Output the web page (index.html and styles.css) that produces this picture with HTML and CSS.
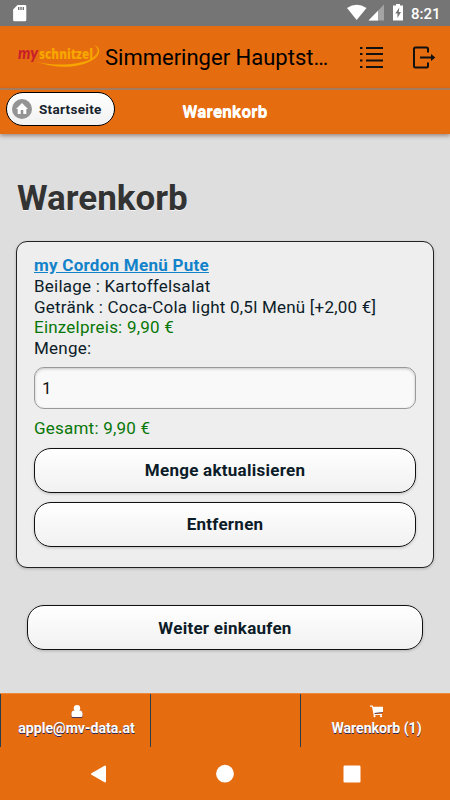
FILE: index.html
```html
<!DOCTYPE html>
<html lang="de">
<head>
    <meta charset="UTF-8">
    <meta name="viewport" content="width=device-width, initial-scale=1.0">
    <title>Warenkorb</title>
    <link rel="stylesheet" href="styles.css">
</head>
<body>
    <!-- Statusleiste -->
    <div class="status-bar">
        <svg class="sd-icon" width="14" height="17" viewBox="0 0 14 17"><path fill="#fff" fill-rule="evenodd" d="M4.500 0H12a1.300 1.300 0 0 1 1.300 1.300V15a1.300 1.300 0 0 1-1.300 1.300H1.400A1.300 1.300 0 0 1 .1 15V4.500zM5 2v3h1.400V2zm2.300 0v3h1.400V2zm2.300 0v3H11V2z"/></svg>
        <svg width="76" height="18" viewBox="0 0 76 18">
            <path fill="#fff" d="M0 4Q9.700-2.500 19.500 4L9.700 16z"/>
            <path fill="#a4a4a4" d="M37 .5v16H21.500z"/>
            <path fill="#fff" d="M31 6.800v9.700h-9.500z"/>
            <path fill="#fff" d="M49 0h4v1.500h3V16.500H46V1.500h3z"/>
            <path fill="#757575" d="M52.300 3.500 48.300 9.500h2.200V14l3.500-6h-2.200z"/>
        </svg>
        <span class="time">8:21</span>
    </div>

    <!-- App-Leiste -->
    <div class="app-bar">
        <svg class="logo" width="84" height="36" viewBox="0 -5 84 36">
            <path d="M77 1C84 3 85 11 74 17C61 24 39 25 20 18C42 23 62 20 72 16C82 11 83 5 77 1z" fill="#f7a600"/>
            <text class="logo-my" x="1" y="15" textLength="20" lengthAdjust="spacingAndGlyphs">my</text>
            <text class="logo-name" x="22" y="14.500" textLength="54" lengthAdjust="spacingAndGlyphs">schnitzel</text>
        </svg>
        <span class="app-title">Simmeringer Hauptst…</span>
        <svg class="list-icon" width="23" height="23" viewBox="0 0 23 23"><path stroke="#111" stroke-width="2" d="M0 2h2.500M6 2h17M0 8h2.500M6 8h17M0 14.500h2.500M6 14.500h17M0 21h2.500M6 21h17"/></svg>
        <svg class="exit-icon" width="23" height="23" viewBox="0 0 23 23"><path fill="none" stroke="#111" stroke-width="2" d="M15 6.500V3q0-1.500-1.500-1.500h-11Q1 1.500 1 3v17q0 1.500 1.500 1.500h11Q15 21.500 15 20v-3.500M7 11.500h12"/><path fill="#111" d="M18 8 22.300 11.500 18 15z"/></svg>
    </div>

    <!-- Kopfzeile -->
    <div class="header">
        <button class="home-btn">
            <svg width="20" height="20" viewBox="0 0 20 20"><circle cx="10" cy="10" r="10" fill="#949494"/><path fill="#fff" d="M10 4 4 10h1.700v5H8.700v-4h2.600v4h3v-5H16z"/></svg>
            Startseite
        </button>
        <h2>Warenkorb</h2>
    </div>

    <!-- Inhalt -->
    <div class="content">
        <h1>Warenkorb</h1>
        <div class="cart-item">
            <a class="item-name" href="#">my Cordon Menü Pute</a>
            <p>Beilage : Kartoffelsalat</p>
            <p>Getränk : Coca-Cola light 0,5l Menü [+2,00 €]</p>
            <p class="price">Einzelpreis: 9,90 €</p>
            <p>Menge:</p>
            <input class="amount" type="text" value="1">
            <p class="price">Gesamt: 9,90 €</p>
            <button class="btn">Menge aktualisieren</button>
            <button class="btn">Entfernen</button>
        </div>
        <button class="btn btn-shop">Weiter einkaufen</button>
    </div>

    <!-- Fußzeile -->
    <div class="footer">
        <a class="tab">
            <svg width="12" height="13" viewBox="0 0 12 13"><path class="icon-shadow" d="M3 5.500Q0 6 0.500 11.500Q.6 13 2 13h8q1.400 0 1.500-1.500Q12 6 9 5.500z"/><path fill="#fff" d="M2.700 5.500Q0 6 .5 10.500.6 12 2 12h8q1.400 0 1.500-1.500Q12 6 9.300 5.500z"/><circle cx="6" cy="3.200" r="3.200" fill="#fff"/></svg>
            <span>apple@mv-data.at</span>
        </a>
        <a class="tab"></a>
        <a class="tab">
            <svg width="13" height="13" viewBox="0 0 13 13"><path class="icon-shadow" d="M3 2.500h10v5L4.500 9z"/><path fill="#fff" d="M0 .5h2.700l.4 1.200H13V7L4.400 8l.2 1H12v1H3.600L2 1.700H0z"/><circle cx="4.500" cy="11.200" r="1.100" fill="#fff"/><circle cx="11" cy="11.200" r="1.100" fill="#fff"/></svg>
            <span>Warenkorb (1)</span>
        </a>
    </div>

    <!-- Navigationsleiste -->
    <div class="nav-bar">
        <svg width="18" height="20" viewBox="0 0 18 20"><path fill="#fff" stroke="#fff" stroke-width="2" stroke-linejoin="round" d="M16 2.500v15L3 10z"/></svg>
        <svg width="18" height="20" viewBox="0 0 18 20"><circle cx="9" cy="9.700" r="8.900" fill="#fff"/></svg>
        <svg width="18" height="20" viewBox="0 0 18 20"><rect x=".5" y="1.500" width="17" height="17" rx="1.300" fill="#fff"/></svg>
    </div>
</body>
</html>
```
FILE: styles.css
```css
* {
    margin: 0;
    padding: 0;
    box-sizing: border-box;
    font-family: Roboto, sans-serif;
}

body {
    width: 450px;
    height: 800px;
    display: flex;
    flex-direction: column;
    background: #dedede;
    color: #0c1c28;
    overflow: hidden;
}

svg {
    flex-shrink: 0;
}

/* Statusleiste */
.status-bar {
    display: flex;
    align-items: center;
    height: 26px;
    padding: 0 10px 0 13px;
    background: #757575;
}

.sd-icon {
    margin-right: auto;
}

.time {
    width: 29px;
    margin-left: -12px;
    padding-top: 1px;
    font-size: 15px;
    font-weight: 500;
    color: #fff;
    white-space: nowrap;
}

/* App-Leiste */
.app-bar {
    display: flex;
    align-items: center;
    height: 62px;
    padding: 0 14px 0 17px;
    background: #e66c10;
}

.logo {
    overflow: visible;
}

.logo-my {
    font: italic 900 17px Lato, sans-serif;
    fill: #c8202a;
}

.logo-name {
    font: 800 14.5px "Open Sans", sans-serif;
    fill: #f7a600;
}

.app-title {
    width: 259px;
    padding-left: 4px;
    font-size: 22px;
    color: #000;
    white-space: nowrap;
}

.exit-icon {
    margin-left: 30px;
}

/* Kopfzeile */
.header {
    position: relative;
    display: flex;
    align-items: center;
    justify-content: center;
    height: 46px;
    border-top: 2px solid #a67a5d;
    background: #e66c10;
    box-shadow: 0 2px 4px rgba(80,40,20,0.45);
}

.header h2 {
    padding-bottom: 2px;
    font-size: 17px;
    line-height: 20px;
    letter-spacing: 0.25px;
    color: #fff;
    text-shadow: 0 1px 0 #fff;
}

.home-btn {
    position: absolute;
    left: 6px;
    top: 2px;
    display: flex;
    align-items: center;
    gap: 7px;
    width: 109px;
    height: 34px;
    padding-left: 5px;
    border: 1px solid #000;
    border-radius: 17px;
    background: linear-gradient(#fff, #f1f1f1);
    font-size: 13.5px;
    font-weight: 700;
    letter-spacing: 0.3px;
    color: #17232d;
}

/* Inhalt */
.content {
    flex: 1;
    padding: 44px 16px 0;
}

h1 {
    margin-bottom: 21px;
    padding-left: 1px;
    font-size: 35px;
    line-height: 42px;
    color: #333;
    text-shadow: 0 1px 0 #f3f3f3;
}

.cart-item {
    height: 327px;
    padding: 13px 17px;
    border: 1px solid #222;
    border-radius: 11px;
    background: #eee;
    box-shadow: 0 1px 3px rgba(0,0,0,0.2);
    font-size: 17px;
    line-height: 20.8px;
    letter-spacing: 0.22px;
    white-space: nowrap;
}

.item-name {
    display: block;
    font-weight: 700;
    letter-spacing: 0.26px;
    color: #1283ca;
}

.price {
    color: #087708;
}

.amount {
    display: block;
    width: 100%;
    height: 42px;
    margin: 8px 0 9px;
    padding: 0 7px;
    border: 1px solid #999;
    border-radius: 10px;
    background: #f9f9f9;
    box-shadow: inset 0 1px 3px rgba(0,0,0,0.2);
    font-size: 17px;
    color: #111;
}

.btn {
    display: block;
    width: 100%;
    height: 45px;
    margin-top: 9px;
    border: 1px solid #111;
    border-radius: 17px;
    background: linear-gradient(#fff, #f1f1f1);
    box-shadow: 0 1px 3px rgba(0,0,0,0.2);
    font-size: 17px;
    font-weight: 700;
    letter-spacing: 0.26px;
    color: #0c1c28;
}

.btn-shop {
    width: 396px;
    margin: 37px auto 0;
}

/* Fußzeile */
.footer {
    display: grid;
    grid-template-columns: repeat(3, 1fr);
    height: 54px;
    border-top: 1px solid #ef893a;
    background: #e66c10;
}

.tab {
    display: flex;
    flex-direction: column;
    align-items: center;
    gap: 1px;
    padding: 11px 0 0 2px;
    border-left: 1px solid #293e4d;
    font-size: 14.1px;
    font-weight: 700;
    line-height: 19px;
    color: #fff;
    text-shadow: 0 1px 0 #24265e;
}

.icon-shadow {
    fill: #493458;
}

/* Navigationsleiste */
.nav-bar {
    display: flex;
    justify-content: center;
    gap: 109px;
    height: 53px;
    padding-top: 17px;
    background: #e66c10;
}
```
